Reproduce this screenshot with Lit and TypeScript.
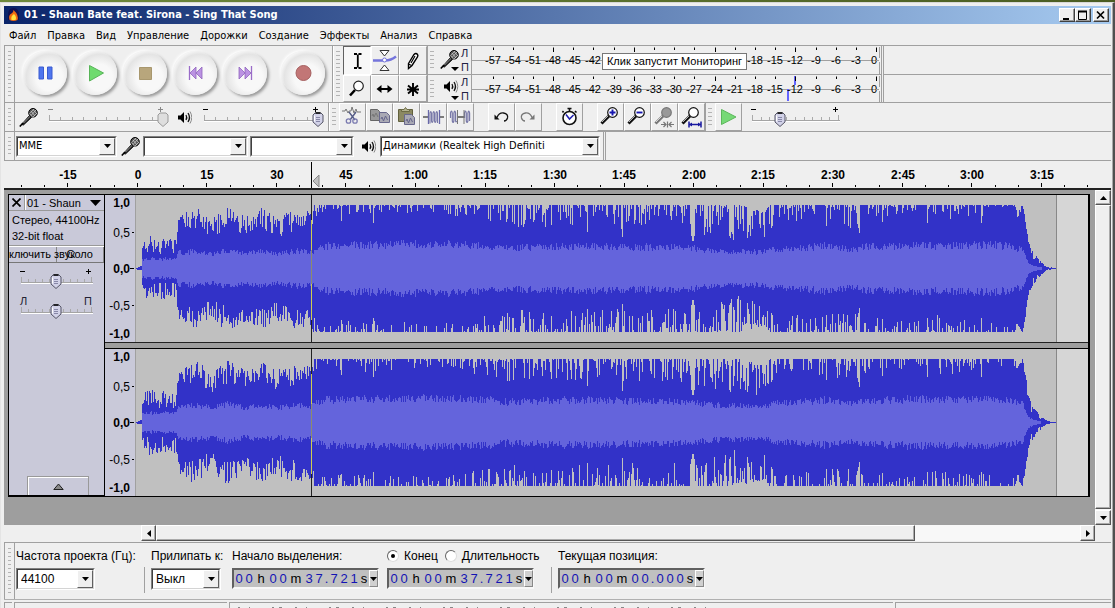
import { LitElement, html, svg, css, nothing } from "lit";
import { customElement, property } from "lit/decorators.js";

/* ---------- icons ---------- */
const mic = svg`<path d="M2.500 17.500 10.500 8.500 12.500 10.500 4.500 18z" fill="#222" stroke="#000" stroke-width=".8"/><path d="M.8 19.500 4 16" stroke="#000" stroke-width="1.600"/><path d="M4.500 16 11.500 9" stroke="#999" stroke-width="1"/><circle cx="14" cy="5.800" r="4.300" fill="#555" stroke="#000"/><path d="M10.500 6.500l3.500 4M12 4l4 5M14 2.500l3.500 4" stroke="#bbb" stroke-width=".9"/><path d="M12 8.500l5-5.500M10.800 6.500l4.200-4.500M14 10l4-4" stroke="#ccc" stroke-width=".8"/>`;
const speaker = svg`<path d="M1 5.500h2.500L7 2v11L3.500 9.500H1z" fill="#000"/><path d="M9 5q1.500 2.500 0 5M11 3q3 4.500 0 9" fill="none" stroke="#111" stroke-width="1.300"/><path d="M13 1.500q3.500 6 0 12" fill="none" stroke="#888"/>`;
const lens = (fill: string, sign: unknown, tail: unknown = nothing, ink = "#111") => svg`<path d="M4.500 20.500 12 13" stroke="${ink}" stroke-width="3"/><path d="M5 19 11 13" stroke="#fff" stroke-width=".7"/><circle cx="15.500" cy="9.500" r="4.800" fill="${fill}" stroke="${ink}" stroke-width="1.200"/>${sign}${tail}`;

const icons: Record<string, unknown> = {
  ibeam: svg`<path d="M11 7h3M15.500 7H18.500M11 21h3M15.500 21H18.500M14.800 7.500V20.500" stroke="#000" stroke-width="1.800"/>`,
  envelope: svg`<path d="M9 3.500h9L13.500 9zM9 23.500h9L13.500 18z" fill="#fff" stroke="#333"/><path d="M2 13.500h12q6 0 11-4" fill="none" stroke="#7575dc" stroke-width="2.500"/><circle cx="13.500" cy="13" r="2" fill="#fff" stroke="#7575dc"/>`,
  pencil: svg`<path d="M9.500 16.500 15 7.500q2-2 3.500 0 .8 1.200 0 2.500L13 18.500 9.500 21.500z" fill="#fff" stroke="#000" stroke-width="1.400"/><path d="M12 16 16 9M9.500 17l3 1.500" stroke="#000" stroke-width="1.200"/>`,
  zoom: svg`<path d="M7 20.500 12 15" stroke="#000" stroke-width="2.600"/><circle cx="15.500" cy="11" r="4.800" fill="#fff" stroke="#222" stroke-width="1.200"/>`,
  shift: svg`<path d="M7 14h13" stroke="#000" stroke-width="2"/><path d="M5.500 14l5-4v8zM21.500 14l-5-4v8z" fill="#000"/>`,
  multi: svg`<path d="M14 8v13M9 10.500l10 8M19 10.500l-10 8M8 14.500h12" stroke="#000" stroke-width="1.900"/>`,
  cut: svg`<path d="M3 8h3l1-2 2 4 1-2h2l1-4 2 6 2-4 1 3h4" fill="none" stroke="#777" stroke-width="1"/><path d="M10 9l6 8M17 9l-6 8" stroke="#555c88" stroke-width="1.400"/><circle cx="9.500" cy="18" r="2.200" fill="none" stroke="#7b7bb0" stroke-width="1.300"/><circle cx="16" cy="18" r="2.200" fill="none" stroke="#7b7bb0" stroke-width="1.300"/>`,
  copy: svg`<path d="M4.500 6.500h7l2 2v9h-9z" fill="#999" stroke="#666"/><path d="M6 13l1-2 1 3 2-4 2 4" fill="none" stroke="#777"/><path d="M13.500 9.500h7l3 3v7h-10z" fill="#a9a9b4" stroke="#68688c"/><path d="M15 16l1-2 1.500 4 2-5 2 4" fill="none" stroke="#66668c"/>`,
  paste: svg`<path d="M5.500 6.500h14v12h-14z" fill="#8b8962" stroke="#62613d"/><path d="M8.500 8.500v-2h2.500l1.500-2 1.500 2h2.500v2z" fill="#b4b391" stroke="#6b6a44"/><path d="M11.500 11.500h7l3 3v7h-10z" fill="#a9a9b4" stroke="#68688c"/><path d="M13 18l1-2 1.500 4 2-5 2 4" fill="none" stroke="#66668c"/>`,
  trim: svg`<path d="M3 14h5M20 14h4" stroke="#555" stroke-width="1.300"/><path d="M8.500 7v14M19.500 7v14" stroke="#6868a8" stroke-width="1.300"/><path d="M10 20.500V10q.8-3 1.500 0v8q.8 3 1.500 0V10q.8-3 1.500 0v8q.8 3 1.500 0V10q.8-3 1.500 0v10" fill="none" stroke="#7878a8" stroke-width="1.100"/>`,
  silence: svg`<path d="M3.500 15v-5q1-4 1.800 0v8q.8 3 1.600 0v-8q.8-4 1.700 0v8q.6 2 1 0M17.500 15v-5q1-4 1.800 0v8q.8 3 1.600 0v-8q.8-4 1.700 0v8" fill="none" stroke="#7878a8" stroke-width="1.200"/><path d="M10 14h7" stroke="#444" stroke-width="1.400"/><path d="M10.500 7v14M17 7v14" stroke="#777"/>`,
  undo: svg`<path d="M9 14.500q2-5 6.500-4.500 5 1 4 5-1 3-3.500 3" fill="none" stroke="#111" stroke-width="1.300"/><path d="M6.500 11.500v5h5z" fill="#111"/>`,
  redo: svg`<path d="M17 14.500q-2-5-6.500-4.500-5 1-4 5 1 3 3.500 3" fill="none" stroke="#777" stroke-width="1.300"/><path d="M19.500 11.500v5h-5z" fill="#777"/>`,
  timer: svg`<circle cx="13.500" cy="15" r="6.500" fill="#fff" stroke="#111" stroke-width="1.600"/><path d="M11.500 5.500h4M13.500 5.500v3M19 8l1.500 1.500M7.500 8 6.500 9.500" stroke="#111" stroke-width="1.600"/><path d="M10 11.500l3.500 4.500 4-4" fill="none" stroke="#2020b0" stroke-width="1.500"/>`,
  zin: lens("#fff", svg`<path d="M12.500 9.500h6M15.500 6.500v6" stroke="#1818b0" stroke-width="1.900"/>`),
  zout: lens("#fff", svg`<path d="M12.500 9.500h6" stroke="#1818b0" stroke-width="1.900"/>`),
  zsel: lens("#999", nothing, svg`<path d="M10 21.500h5M18 21.500h5M12.500 19l2.500 2.500L12.500 24M20.500 19 18 21.500l2.500 2.500M16.500 18.500v6" fill="none" stroke="#777" stroke-width="1.200"/>`, "#777"),
  zfit: lens("#fff", nothing, svg`<path d="M11 21.500h12M11 18.500v6M23 18.500v6" stroke="#1818a0" stroke-width="1.500"/><path d="M11 21.500l3-2v4zM23 21.500l-3-2v4z" fill="#1818a0"/>`),
  play: svg`<path d="M6.500 6.500 21 14 6.500 21.500z" fill="#76d976" stroke="#5bb75b"/>`,
};

const transport: [string, unknown][] = [
  ["Пауза", svg`<path d="M16 16h4.500v12H16zM24.500 16H29v12h-4.500z" fill="#4f76ee" stroke="#3a5bd0"/>`],
  ["Воспроизвести", svg`<path d="M16.500 14.500 30.500 22 16.500 30z" fill="#6fdb6f" stroke="#58b458"/>`],
  ["Стоп", svg`<path d="M16.500 16.500h12v12h-12z" fill="#b8a67c" stroke="#a8976e"/>`],
  ["К началу", svg`<path d="M16.500 15v14" stroke="#9a6cc8" stroke-width="1.300"/><path d="M23 16v12l-6-6zM29 16v12l-6-6z" fill="#bb92e2" stroke="#8f64bd" stroke-width=".8"/>`],
  ["К концу", svg`<path d="M28.500 15v14" stroke="#9a6cc8" stroke-width="1.300"/><path d="M16 16v12l6-6zM22 16v12l6-6z" fill="#bb92e2" stroke="#8f64bd" stroke-width=".8"/>`],
  ["Запись", svg`<circle cx="22.500" cy="22" r="7.500" fill="#c27676" stroke="#a55f5f"/>`],
];

/* ---------- waveform data ---------- */
type Point = [number, number, number, number];
// x, lowest peak, highest peak, RMS level
const ENVELOPE: Point[] = [
  [0, 0, 0, 0], [2, 1, 1, 0], [5, 1, 2, 0], [6, 14, 30, 8], [12, 14, 32, 9], [40, 13, 30, 9],
  [42, 38, 52, 15], [60, 36, 62, 17], [75, 28, 50, 14], [90, 38, 62, 18], [110, 34, 52, 14],
  [125, 40, 60, 17], [140, 30, 52, 14], [160, 38, 60, 17], [175, 42, 56, 16], [177, 46, 64, 17],
  [188, 52, 67, 22], [230, 50, 67, 23], [300, 54, 68, 24], [355, 44, 66, 22], [370, 40, 66, 20],
  [440, 42, 67, 22], [500, 38, 66, 21], [555, 40, 66, 20], [565, 34, 64, 18], [600, 26, 64, 16],
  [630, 26, 56, 16], [636, 46, 67, 18], [690, 46, 68, 22], [718, 38, 64, 18], [726, 48, 68, 21],
  [785, 52, 68, 23], [800, 46, 66, 22], [860, 52, 68, 23], [878, 52, 68, 21], [882, 46, 55, 18],
  [887, 61, 64, 19], [889, 46, 54, 16], [891, 36, 42, 10], [893, 16, 26, 5], [898, 6, 15, 2],
  [905, 3, 7, 1], [909, 1, 3, 0], [912, 0, 1, 0], [921, 0, 0, 0],
];
const DIPS: Record<number, number> = {
  205: 47, 237: 45, 388: 44, 397: 46, 406: 46, 415: 43, 451: 36, 487: 31,
  556: 32, 557: 27, 558: 27, 559: 32, 595: 30, 594: 32, 612: 30, 613: 36,
  636: 40, 637: 42, 691: 42, 722: 44, 723: 40, 724: 35, 747: 46, 792: 45, 846: 45,
};

// Closed outline that steps one unit per sample
function outline(top: number[], bottom: number[]) {
  let d = `M0 ${top[0]}`;
  top.forEach((y, x) => (d += `V${y}H${x + 1}`));
  for (let x = bottom.length - 1; x >= 0; x--) d += `V${bottom[x]}H${x}`;
  return d + "Z";
}

function buildWave(seed: number) {
  let s = seed;
  const rnd = () => {
    s = (s * 1664525 + 1013904223) % 4294967296;
    return s / 4294967296;
  };
  const top: number[] = [];
  const bottom: number[] = [];
  const rTop: number[] = [];
  const rBottom: number[] = [];
  let k = 0;
  for (let x = 0; x < 921; x++) {
    while (k < ENVELOPE.length - 2 && ENVELOPE[k + 1][0] <= x) k++;
    const a = ENVELOPE[k];
    const b = ENVELOPE[k + 1];
    const t = (x - a[0]) / (b[0] - a[0]);
    const lo = a[1] + (b[1] - a[1]) * t;
    const hi = a[2] + (b[2] - a[2]) * t;
    const level = a[3] + (b[3] - a[3]) * t;
    const pick = () => Math.min(63, hi - (hi - lo) * Math.pow(rnd(), x < 178 ? 1.3 : 3));
    let up = pick();
    let down = pick();
    if (DIPS[x]) {
      up = DIPS[x];
      down = DIPS[x] + 4;
    }
    const r = Math.min(level * (0.82 + 0.36 * rnd()), up - 1);
    top.push(Math.round(73 - up));
    bottom.push(Math.round(74 + down));
    rTop.push(r > 0.7 ? Math.round(73 - r) : 74);
    rBottom.push(r > 0.7 ? Math.round(74 + r) : 74);
  }
  return { peaks: outline(top, bottom), rms: outline(rTop, rBottom) };
}
const WAVES = [buildWave(4211), buildWave(90177)];

/* ---------- slider ---------- */
@customElement("tick-slider")
export class TickSlider extends LitElement {
  @property({ type: Number }) width = 126;
  @property({ type: Number }) value = 50;
  @property() low = "-";
  @property() high = "+";
  @property() name = "";
  @property({ type: Boolean }) off = false;

  static styles = css`
    :host { display: grid; justify-content: start; font: 11px "Liberation Sans", Arial, sans-serif; }
    svg, input { grid-area: 1 / 1; height: 20px; display: block; overflow: visible; }
    input { appearance: none; margin: 0; background: none; padding: 5px 0 0; box-sizing: border-box; width: 0; min-width: 100%; }
    input::-webkit-slider-runnable-track { height: 15px; background: none; }
    input::-webkit-slider-thumb {
      appearance: none; width: 12px; height: 15px; border: 0; border-radius: 0;
      background: url('data:image/svg+xml,<svg xmlns="http://www.w3.org/2000/svg" width="12" height="15"><path d="M3 1h6l2 2v7l-5 4.500L1 10V3z" fill="%23d2d2e8" stroke="%23555566"/><path d="M3.500 1h5" stroke="%23000" stroke-width="1.500"/><path d="M4 5.500h4M4 7.500h4M4 9.500h4" stroke="%238888a8"/><path d="M2.500 3.500v6" stroke="%23fff"/></svg>');
    }
    input.off::-webkit-slider-thumb {
      background: url('data:image/svg+xml,<svg xmlns="http://www.w3.org/2000/svg" width="12" height="15"><path d="M3 1h6l2 2v7l-5 4.500L1 10V3z" fill="%23dedede" stroke="%23999999"/></svg>');
    }
  `;

  render() {
    const span = this.width - 12;
    const ink = this.off ? "#888" : "#000";
    const end = 6 + span;
    const sign = this.low === "-";
    return html`
      <svg width=${this.width} height="20" aria-hidden="true">
        ${Array.from({ length: 11 }, (_, i) => {
          const x = Math.round(6 + (span * i) / 10) + 0.5;
          return svg`<path d="M${x} ${i % 10 ? 10 : 8}V13" stroke="#aaa"/>`;
        })}
        <path d="M6 13.500H${end + 2}" stroke="#a4a4a4" />
        <path d="M6 14.500H${end + 2}" stroke="#fff" />
        ${sign
          ? svg`<path d="M5 2.500h5M${end - 5} 2.500h5M${end - 2.5} 0v5" stroke="${ink}"/>`
          : svg`<text x="5" y="6" fill="#223">${this.low}</text><text x="${end - 7}" y="6" fill="#223">${this.high}</text>`}
      </svg>
      <input class=${this.off ? "off" : ""} type="range" aria-label=${this.name} .value=${String(this.value)} />
    `;
  }
}

/* ---------- drop-down ---------- */
@customElement("combo-box")
export class ComboBox extends LitElement {
  @property() value = "";
  @property() name = "";

  static styles = css`
    :host { display: grid; box-sizing: border-box; border: 1px solid; border-color: #808080 #fff #fff #808080; background: #fff; }
    .frame { display: grid; grid-template-columns: 1fr 16px; border: 1px solid; border-color: #404040 #d4d4d4 #d4d4d4 #404040; }
    select { appearance: none; grid-area: 1 / 1 / 2 / 3; border: 0; border-radius: 0; margin: 0; padding: 0 18px 0 var(--inset, 1px); background: none; font: inherit; color: #000; min-width: 0; outline: 0; }
    .arrow { grid-area: 1 / 2; display: grid; place-items: center; background: #efefef; border: 1px solid; border-color: #fff #606060 #606060 #fff; pointer-events: none; }
  `;

  render() {
    return html`<div class="frame">
      <select aria-label=${this.name}><option>${this.value}</option></select>
      <span class="arrow"><svg width="7" height="4"><path d="M0 0h7L3.500 4z" /></svg></span>
    </div>`;
  }
}

/* ---------- time field ---------- */
@customElement("time-field")
export class TimeField extends LitElement {
  @property() value = "";
  @property() name = "";

  static styles = css`
    :host { display: flex; box-sizing: border-box; height: 21px; width: 147px; background: #c0c0c0; border: 2px solid; border-color: #606060 #f8f8f8 #f8f8f8 #606060; font: 13px/18px "Liberation Sans", Arial, sans-serif; }
    .cells { display: flex; flex: 1; }
    .cells span { text-align: center; width: 10px; color: #1414b4; }
    .cells .h { width: 14px; color: #000; }
    .cells .m { width: 16px; color: #000; }
    .cells .s { color: #000; }
    .cells .dot { width: 5px; }
    button { width: 9px; padding: 0; border: 1px solid; border-color: #fff #888 #888 #fff; background: #d0d0d0; display: grid; place-items: center; }
  `;

  render() {
    const kind: Record<string, string> = { h: "h", m: "m", s: "s", ".": "dot" };
    return html`
      <div class="cells" role="group" aria-label=${this.name}>
        ${[...this.value].map((c) => html`<span class=${kind[c] ?? "digit"}>${c}</span>`)}
      </div>
      <button aria-label="Формат"><svg width="7" height="4"><path d="M0 0h7L3.500 4z" /></svg></button>
    `;
  }
}

/* ---------- application ---------- */
@customElement("app-root")
export class AppRoot extends LitElement {
  static styles = css`
    :host { display: block; height: 100vh; overflow: hidden; font: 11px/14px "DejaVu Sans Condensed", Tahoma, sans-serif; color: #000; }
    * { box-sizing: border-box; }
    button { padding: 0; margin: 0; border: 0; background: none; font: inherit; color: inherit; }
    svg { display: block; }
    .desktop { height: 100%; padding-top: 2px; background: linear-gradient(90deg, #6f8a3c, #4a5c22); }
    .window { height: 100%; display: flex; flex-direction: column; background: #efefef; border: solid; border-width: 1px 2px 0 1px; border-color: #d8d8d8 #505050 #505050 #e4e4e4; padding: 3px 2px 0 3px; box-shadow: inset -1px 0 #a8a8a8; }
    .title { display: flex; align-items: center; height: 18px; flex: none; gap: 3px; padding: 0 2px 0 2px; background: linear-gradient(90deg, #0a246a, #a6caf0); color: #fff; font-weight: bold; }
    .title h1 { margin: 0; flex: 1; font: inherit; white-space: nowrap; }
    .caps { display: flex; }
    .caps button { width: 16px; height: 14px; background: #efefef; border: 1px solid; border-color: #fff #404040 #404040 #fff; box-shadow: inset -1px -1px #999; display: grid; place-items: center; }
    .caps .close { margin-left: 2px; }
    .menu { display: flex; flex: none; gap: 11px; height: 22px; padding: 5px 5px 0; border-bottom: 1px solid #a0a0a0; }
    .menu button { line-height: 14px; height: 14px; }

    .row { display: flex; flex: none; border-bottom: 1px solid #a0a0a0; height: 29px; }
    .main { height: 57px; }
    .bar { display: flex; border-right: 1px solid #a0a0a0; }
    .bar + .bar { border-left: 1px solid #fff; }
    .grip { flex: none; width: 8px; padding: 5px 2px; margin-right: 1px; }
    .grip::before { content: ""; display: block; height: 100%; background: repeating-linear-gradient(#b4b4b4 0 1px, transparent 1px 4px); }
    .grip.edge { width: 11px; margin: 0; padding: 5px 3px; border: solid #a0a0a0; border-width: 0 1px; }
    .transport { padding-right: 7px; }
    .round { width: 44px; height: 44px; border-radius: 50%; background: radial-gradient(circle at 60% 60%, #f8f8f8 0 35%, #e4e4e4 62%, #f4f4f4 72%); box-shadow: 2px 2px 3px #999, -1px -1px 3px #fff; }
    .rounds { display: flex; gap: 6px; padding: 5px 0 0 8px; }
    .rounds button:last-child { margin-left: 8px; }
    .tool { flex: none; width: 27px; height: 28px; border: 1px solid; border-color: #fff #a0a0a0 #a0a0a0 #fff; }
    .tool svg { margin: -1px 0 0 -1px; }
    .tools { display: grid; grid-template-columns: 28px 28px 28px; grid-template-rows: 29px 27px; }
    .tools .tool { width: auto; height: auto; }
    .tool.on { background: #f7f7f7; border-color: #606060 #fff #fff #606060; }
    .meters { display: flex; flex-direction: column; border-right: 3px double #a0a0a0; }
    .meter { display: flex; height: 28px; position: relative; font: 11px "Liberation Sans", Arial, sans-serif; }
    .meter:first-child { height: 29px; border-bottom: 1px solid #a0a0a0; }
    .meter button { width: 24px; }
    .lr { display: flex; flex-direction: column; justify-content: space-between; width: 10px; font-size: 11px; line-height: 14px; color: #224; }
    .scale { border-left: 1px solid #a0a0a0; }
    .after { flex: 1; align-self: start; height: 29px; border-bottom: 1px solid #a0a0a0; }
    .tip { position: absolute; left: 174px; top: 7px; width: 145px; height: 17px; text-align: center; background: #fff; border: 1px solid #777; font: 11px/15px "Liberation Sans", Arial, sans-serif; white-space: nowrap; }
    .mixer { align-items: center; width: 325px; }
    .mixer .grip, .device .grip { align-self: stretch; }
    .pic { flex: none; }
    .mixer .pic { margin: 0 4px; }
    .mixer .spk { margin: 0 6px 0 8px; }
    .gap { width: 14px; }
    .speed { padding: 4px 0 0 4px; }
    .device { align-items: center; width: 602px; border-right: 3px double #a0a0a0; }
    .device combo-box { height: 21px; }
    .device .pic { margin: 0 2px 0 4px; }
    .device .spk { margin: 0 4px 0 7px; }
    .c1 { width: 101px; margin-left: 1px; }
    .c2 { width: 105px; margin-right: 2px; }
    .c3 { width: 104px; }
    .c4 { width: 220px; }

    .ruler { flex: none; width: 100%; height: 27px; font: bold 12px "Liberation Sans", Arial, sans-serif; }
    .work { flex: 1; min-height: 0; display: flex; border-top: 2px solid #222; background: #9e9e9e; }
    .view { flex: 1; min-width: 0; padding: 4px 5px 0 4px; }
    .track { display: flex; height: 303px; border: 1px solid #000; border-width: 1px 2px 2px 1px; background: #9e9e9e; }
    .panel { width: 96px; flex: none; display: flex; flex-direction: column; background: #c9c9d9; border-right: 1px solid #000; font: 11px/16px "Liberation Sans", Arial, sans-serif; }
    .head { display: flex; height: 16px; border-bottom: 1px solid #999; }
    .x { width: 16px; border-right: 1px solid #999; display: grid; place-items: center; }
    .name { flex: 1; display: flex; align-items: center; justify-content: space-between; padding: 0 3px 0 1px; border-left: 1px solid #fff; white-space: nowrap; }
    .info { height: 35px; padding: 1px 0 0 3px; border-bottom: 1px solid #999; white-space: nowrap; }
    .info p { margin: 0; }
    .ms { display: flex; height: 17px; border-top: 1px solid #fff; border-bottom: 1px solid #777; }
    .ms button { flex: 1; min-width: 0; height: 15px; line-height: 15px; display: flex; justify-content: center; white-space: nowrap; border: solid; border-width: 0 1px 0 0; border-color: #888; }
    .ms .mute { justify-content: flex-start; }
    .panel tick-slider { margin: 6px 0 0 6px; }
    .panel tick-slider + tick-slider { margin-top: 10px; }
    .fold { width: 62px; height: 19px; margin: auto auto 0 18px; border: 1px solid #999; border-bottom: 0; box-shadow: inset 1px 1px #fff; display: grid; place-items: center; }
    .channels { flex: 1; min-width: 0; display: flex; flex-direction: column; gap: 5px; }
    .channel { display: flex; height: 148px; border-bottom: 1px solid #222; }
    .channel + .channel { border-top: 1px solid #000; border-bottom: 0; }
    .vr { flex: none; width: 31px; background: #c9c9d9; border-right: 1px solid #a0a0a0; font: 12px "Liberation Sans", Arial, sans-serif; }
    .vr text { text-anchor: end; }
    .b { font-weight: bold; }
    .wave { flex: 1; min-width: 0; height: 147px; background: #c0c0c0; }
    .blank { flex: none; width: 32px; background: #d6d6d6; border-left: 1px solid #888; }

    .sb { background: #f8f8f8; display: flex; }
    .sb button, .sb i { background: #efefef; border: 1px solid; border-color: #fff #555 #555 #fff; box-shadow: inset -1px -1px #aaa; display: grid; place-items: center; }
    .vs { width: 16px; flex: none; flex-direction: column; }
    .vs button { height: 15px; }
    .vs i { flex: 1; margin-bottom: 1px; }
    .hrow { display: flex; flex: none; height: 18px; padding: 0 16px 1px 137px; border-bottom: 1px solid #a0a0a0; }
    .hs { flex: 1; }
    .hs button { width: 15px; }
    .hs i { flex: 759; }
    .hs u { flex: 166; }

    .select { display: flex; flex: none; height: 57px; border-bottom: 1px solid #b0b0b0; font: 12px/14px "Liberation Sans", Arial, sans-serif; }
    .col { display: flex; flex-direction: column; gap: 5px; padding-top: 6px; margin-left: 1px; white-space: nowrap; }
    .col combo-box { height: 22px; --inset: 3px; }
    .col combo-box, .col time-field { flex: none; }
    .rate { width: 128px; } .rate combo-box { width: 79px; }
    .snap { width: 80px; } .snap combo-box { width: 70px; }
    .start { width: 154px; }
    .end { width: 164px; }
    .rule { width: 1px; height: 26px; margin: 24px 5px 0 0; background: #a0a0a0; }
    .radios { display: flex; gap: 7px; height: 14px; }
    .radios label { display: flex; gap: 5px; align-items: center; }
    .radios input { appearance: none; width: 12px; height: 12px; margin: 0; border-radius: 50%; background: #fff; border: 1px solid; border-color: #666 #ddd #ddd #666; display: grid; place-items: center; }
    .radios input:checked::before { content: ""; width: 4px; height: 4px; border-radius: 50%; background: #000; }
    .status { flex: none; display: grid; grid-template-columns: 8px 213px 1fr 216px; gap: 2px; height: 8px; padding-top: 2px; }
    .status span { border: solid #a0a0a0; border-width: 1px 0 0 1px; }
    .hint { padding: 4px 0 0 8px; }
  `;

  private tool(name: string, label: string, on = false) {
    return html`<button class="tool ${on ? "on" : ""}" aria-label=${label}><svg width="27" height="27" fill="none">${icons[name]}</svg></button>`;
  }

  // Labels between the two given levels lie under the tooltip and are left out
  private scale(levels: unknown = nothing, from = 1, to = 1) {
    return html`<svg class="scale" width="410" height="28">
      <path d="M0 14.500H404" stroke="#a0a0a0" />
      ${levels}
      ${Array.from({ length: 20 }, (_, i) => {
        const x = Math.round(20.5 + (i * 383.6) / 19);
        const db = i * 3 - 57;
        const covered = db >= from && db <= to;
        return svg`<path d="M${x + 0.5} 1.500V${db % 4 ? 4 : 6}" stroke="#000"/>${covered ? nothing : svg`<text x="${i === 19 ? x + 1 : x}" y="18" text-anchor="${i === 19 ? "end" : "middle"}">${db}</text>`}`;
      })}
      <path d="M407.500 1V12M407.500 16V28M404 14.500h3" stroke="#a0a0a0" />
    </svg>`;
  }

  private ruler() {
    const step = 69.55 / 3;
    const labels = ["-15", "0", "15", "30", "45", "1:00", "1:15", "1:30", "1:45", "2:00", "2:15", "2:30", "2:45", "3:00", "3:15"];
    return html`<svg class="ruler" aria-label="Шкала времени">
      ${Array.from({ length: 47 }, (_, i) => {
        const x = Math.floor(133.3 + (i - 5) * step) + 0.5;
        return svg`<path d="M${x} ${(i - 5) % 3 ? 24 : 22}V26" stroke="#000"/>`;
      })}
      ${labels.map((t, i) => svg`<text x="${Math.round(133.5 + (i - 1) * 69.55)}" y="18" text-anchor="middle">${t}</text>`)}
      <path d="M307.500 1V27" stroke="#000" stroke-width="1" />
      <path d="M315 14V26L309 20z" fill="#c0c0c0" stroke="#888" />
    </svg>`;
  }

  private channel(i: number) {
    const w = WAVES[i];
    const marks: [string, number, boolean][] = [["1,0", 12, true], ["0,5", 42, false], ["0,0", 78, true], ["-0,5", 115, false], ["-1,0", 143, true]];
    return html`<div class="channel">
      <svg class="vr" width="31" height="147">
        ${marks.map(([t, y, b]) => svg`<text class="${b ? "b" : ""}" x="25" y="${y}">${t}</text>`)}
        <path d="M27 37.500h2M25 73.500h4M27 110.500h2" stroke="#000" />
      </svg>
      <svg class="wave" viewBox="0 0 921 147" preserveAspectRatio="none" shape-rendering="crispEdges">
        <path d=${w.peaks} fill="#3232c8" />
        <path d=${w.rms} fill="#6464dc" />
        <path d="M175 0h1v25h-1zM175 125h1v22h-1z" fill="#222" />
        <path d="M175 25h1v30h-1zM175 89h1v36h-1z" fill="#cccc50" />
        <path d="M175 55h1v34h-1z" fill="#8c8c6c" />
      </svg>
      <div class="blank"></div>
    </div>`;
  }

  render() {
    const menu = ["Файл", "Правка", "Вид", "Управление", "Дорожки", "Создание", "Эффекты", "Анализ", "Справка"];
    return html`
    <div class="desktop"><div class="window">
      <header class="title">
        <svg width="15" height="16"><path d="M2 8Q2 1 7.500 1T13 8v5H2z" fill="#101050"/><path d="M7.500 3Q13 8 11.500 13q-4 2-8 0Q2 8 5.500 6.500q2-1 2-3.500z" fill="#f06a10"/><path d="M8 7q3 3 1.500 6h-4Q4.500 9 8 7z" fill="#ffe040"/></svg>
        <h1>01 - Shaun Bate feat. Sirona - Sing That Song</h1>
        <div class="caps">
          <button aria-label="Свернуть"><svg width="12" height="11"><path d="M2 9h6" stroke="#000" stroke-width="2"/></svg></button>
          <button aria-label="Развернуть"><svg width="12" height="11"><path d="M1.500 2v7.500h8V2" fill="none" stroke="#000"/><path d="M1 1.500h9" stroke="#000" stroke-width="2"/></svg></button>
          <button class="close" aria-label="Закрыть"><svg width="12" height="11"><path d="M2 1.500l7 7M9 1.500l-7 7" stroke="#000" stroke-width="1.700"/></svg></button>
        </div>
      </header>
      <nav class="menu">${menu.map((m) => html`<button>${m}</button>`)}</nav>

      <div class="row main">
        <div class="bar transport"><span class="grip edge"></span>
          <div class="rounds">${transport.map(([label, icon]) => html`<button class="round" aria-label=${label}><svg width="44" height="44">${icon}</svg></button>`)}</div>
        </div>
        <div class="bar"><span class="grip"></span>
          <div class="tools">
            ${this.tool("ibeam", "Выделение", true)}${this.tool("envelope", "Огибающая")}${this.tool("pencil", "Карандаш")}
            ${this.tool("zoom", "Масштаб")}${this.tool("shift", "Перемещение")}${this.tool("multi", "Мультиинструмент")}
          </div>
        </div>
        <div class="meters">
          <div class="meter"><span class="grip"></span>
            <button aria-label="Уровень записи"><svg width="24" height="27"><g transform="translate(3 2)">${mic}</g><path d="M14 20h8l-4 4z"/></svg></button>
            <span class="lr"><span>Л</span><span>П</span></span>
            ${this.scale(nothing, -39, -21)}
            <span class="tip" role="tooltip">Клик запустит Мониторинг</span>
          </div>
          <div class="meter"><span class="grip"></span>
            <button aria-label="Уровень воспроизведения"><svg width="24" height="27"><g transform="translate(6 3)">${speaker}</g><path d="M14 20h8l-4 4z"/></svg></button>
            <span class="lr"><span>Л</span><span>П</span></span>
            ${this.scale(svg`<path d="M323 1V10M316 14V26" stroke="#6464ff" stroke-width="2"/>`)}
          </div>
        </div>
        <div class="after"></div>
      </div>

      <div class="row">
        <div class="bar mixer"><span class="grip edge"></span>
          <svg class="pic" width="20" height="20">${mic}</svg>
          <tick-slider width="126" value="100" off name="Громкость записи"></tick-slider>
          <svg class="pic spk" width="15" height="15">${speaker}</svg>
          <tick-slider width="126" value="100" name="Громкость воспроизведения"></tick-slider>
        </div>
        <div class="bar"><span class="grip"></span>
          ${this.tool("cut", "Вырезать")}${this.tool("copy", "Копировать")}${this.tool("paste", "Вставить")}${this.tool("trim", "Обрезать края")}${this.tool("silence", "Заполнить тишиной")}
          <span class="gap"></span>${this.tool("undo", "Отменить")}${this.tool("redo", "Повторить")}
          <span class="gap"></span>${this.tool("timer", "Синхронизация")}
          <span class="gap"></span>${this.tool("zin", "Приблизить")}${this.tool("zout", "Отдалить")}${this.tool("zsel", "Выделение в окно")}${this.tool("zfit", "Проект в окно")}
        </div>
        <div class="row"><span class="grip"></span>${this.tool("play", "Воспроизвести на скорости")}
          <tick-slider class="speed" width="98" value="32" name="Скорость"></tick-slider>
        </div>
      </div>

      <div class="row">
        <div class="bar device"><span class="grip edge"></span>
          <combo-box class="c1" value="MME" name="Аудиосервер"></combo-box>
          <svg class="pic" width="20" height="20">${mic}</svg>
          <combo-box class="c2" name="Устройство записи"></combo-box>
          <combo-box class="c3" name="Каналы записи"></combo-box>
          <svg class="pic spk" width="15" height="15">${speaker}</svg>
          <combo-box class="c4" value="Динамики (Realtek High Definiti" name="Устройство воспроизведения"></combo-box>
        </div>
      </div>

      ${this.ruler()}

      <main class="work">
        <div class="view"><section class="track">
          <div class="panel">
            <div class="head">
              <button class="x" aria-label="Закрыть дорожку"><svg width="9" height="9"><path d="M.5.5l8 8M8.500.5l-8 8" stroke="#000" stroke-width="1.700"/></svg></button>
              <button class="name">01 - Shaun<svg width="11" height="6"><path d="M0 0h11L5.500 6z"/></svg></button>
            </div>
            <div class="info"><p>Стерео, 44100Hz</p><p>32-bit float</p></div>
            <div class="ms"><button class="mute">ключить звук</button><button>Соло</button></div>
            <tick-slider width="82" value="50" name="Усиление"></tick-slider>
            <tick-slider width="82" value="50" low="Л" high="П" name="Баланс"></tick-slider>
            <button class="fold" aria-label="Свернуть дорожку"><svg width="11" height="7"><path d="M.8 6.500h9.400L5.500 1z" fill="#888" stroke="#222"/></svg></button>
          </div>
          <div class="channels">${this.channel(0)}${this.channel(1)}</div>
        </section></div>
        <div class="sb vs">
          <button aria-label="Вверх"><svg width="7" height="4"><path d="M0 4h7L3.500 0z"/></svg></button><i></i>
          <button aria-label="Вниз"><svg width="7" height="4"><path d="M0 0h7L3.500 4z"/></svg></button>
        </div>
      </main>
      <div class="hrow"><div class="sb hs">
        <button aria-label="Влево"><svg width="4" height="7"><path d="M4 0v7L0 3.500z"/></svg></button><i></i><u></u>
        <button aria-label="Вправо"><svg width="4" height="7"><path d="M0 0v7l4-3.500z"/></svg></button>
      </div></div>

      <footer class="select"><span class="grip edge"></span>
        <div class="col rate"><span>Частота проекта (Гц):</span><combo-box value="44100" name="Частота проекта (Гц)"></combo-box></div>
        <span class="rule"></span>
        <div class="col snap"><span>Прилипать к:</span><combo-box value="Выкл" name="Прилипать к"></combo-box></div>
        <div class="col start"><span>Начало выделения:</span><time-field value="00h00m37.721s" name="Начало выделения"></time-field></div>
        <div class="col end">
          <div class="radios"><label><input type="radio" name="mode" checked />Конец</label><label><input type="radio" name="mode" />Длительность</label></div>
          <time-field value="00h00m37.721s" name="Конец выделения"></time-field>
        </div>
        <span class="rule"></span>
        <div class="col"><span>Текущая позиция:</span><time-field value="00h00m00.000s" name="Текущая позиция"></time-field></div>
      </footer>
      <div class="status"><span></span><span></span><span class="hint"><svg width="480" height="1"><path d="M0 .5H478" stroke="#888" stroke-dasharray="2 9 1 22 2 5 3 13"/></svg></span><span></span></div>
    </div></div>`;
  }
}
